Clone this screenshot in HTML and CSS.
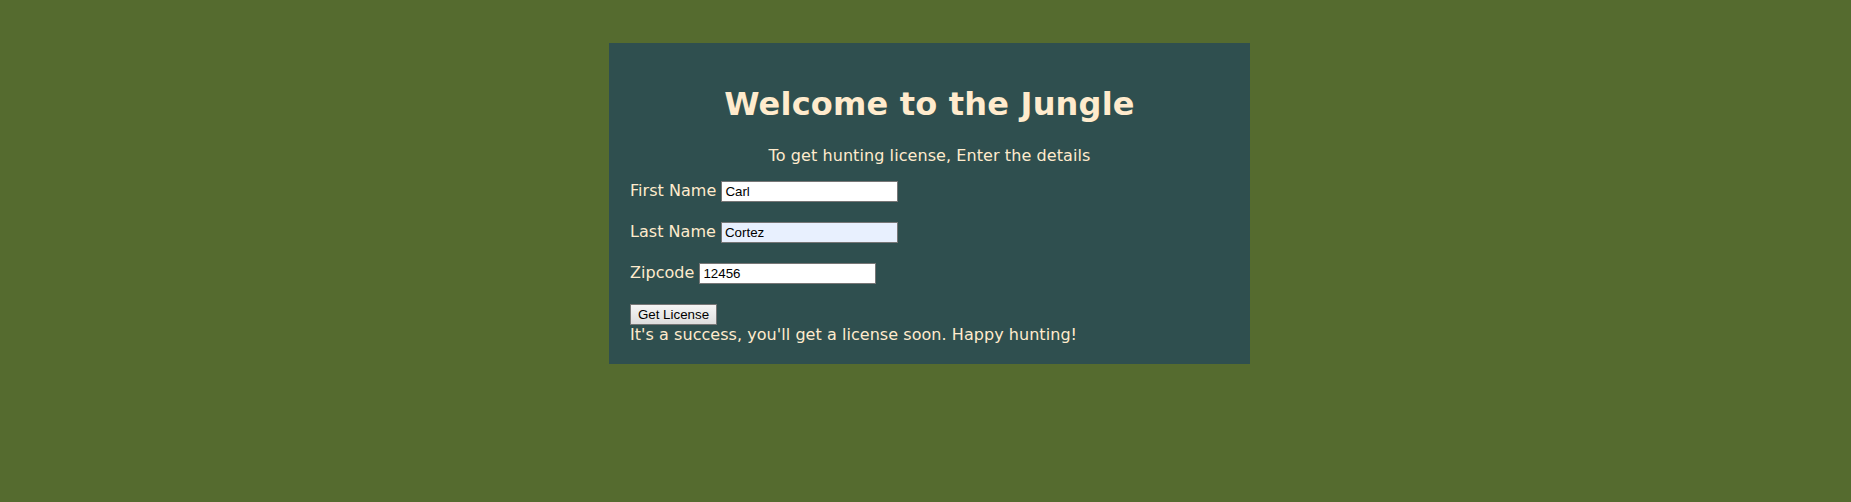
FILE: index.html
```html
<!DOCTYPE html>
<html lang="en">
<head>
<meta charset="utf-8">
<title>Welcome to the Jungle</title>
<link rel="stylesheet" href="styles.css">
</head>
<body>
<div class="page">
  <div class="card">
    <h1 class="title">Welcome to the Jungle</h1>
    <p class="subtitle">To get hunting license, Enter the details</p>
    <form class="form">
      <div class="field field-first">
        <label class="label" for="fname">First Name</label>
        <input class="input" id="fname" type="text" value="Carl">
      </div>
      <div class="field">
        <label class="label" for="lname">Last Name</label>
        <input class="input input-autofill" id="lname" type="text" value="Cortez">
      </div>
      <div class="field">
        <label class="label" for="zip">Zipcode</label>
        <input class="input" id="zip" type="text" value="12456">
      </div>
      <div class="field">
        <button class="button" type="button">Get License</button>
      </div>
      <p class="message">It's a success, you'll get a license soon. Happy hunting!</p>
    </form>
  </div>
</div>
</body>
</html>
```

FILE: styles.css
```css
html, body {
  margin: 0;
  padding: 0;
}

body {
  background: #556b2f;
  width: 1851px;
  height: 502px;
  overflow: hidden;
}

.page {
  padding: 43px 0 0 8px;
}

.card {
  width: 641px;
  box-sizing: border-box;
  margin: 0 auto;
  background: #2f4f4f;
  padding: 41px 21px 19px;
  color: #ffebcd;
  font-family: "DejaVu Sans", Verdana, sans-serif;
}

.title {
  margin: 0;
  font-size: 32px;
  line-height: 40px;
  font-weight: bold;
  text-align: center;
  letter-spacing: 0.2px;
}

.subtitle {
  margin: 22px 0 0;
  font-size: 16px;
  line-height: 20px;
  text-align: center;
  letter-spacing: 0.08px;
}

.form {
  margin: 0;
}

.field {
  display: flex;
  align-items: baseline;
  gap: 5px;
  height: 21px;
  margin-top: 20px;
}

.field-first {
  margin-top: 15px;
}

.label {
  font-size: 16px;
  line-height: 19px;
  letter-spacing: 0.04px;
}

.input {
  box-sizing: border-box;
  width: 177px;
  height: 21px;
  margin: 0;
  padding: 1px 3px;
  border: 1px solid #767676;
  background: #ffffff;
  color: #000000;
  font-family: "Liberation Sans", Arial, sans-serif;
  font-size: 13.333px;
  outline: none;
}

.input-autofill {
  background: #e8f0fe;
}

.button {
  box-sizing: border-box;
  width: 87px;
  height: 21px;
  margin: 0;
  padding: 1px 6px;
  border: 1px solid #767676;
  border-radius: 0;
  background: linear-gradient(#f5f5f5, #dedede);
  color: #000000;
  font-family: "Liberation Sans", Arial, sans-serif;
  font-size: 13.333px;
}

.message {
  margin: 0;
  font-size: 16px;
  line-height: 20px;
  letter-spacing: 0.05px;
}
```
